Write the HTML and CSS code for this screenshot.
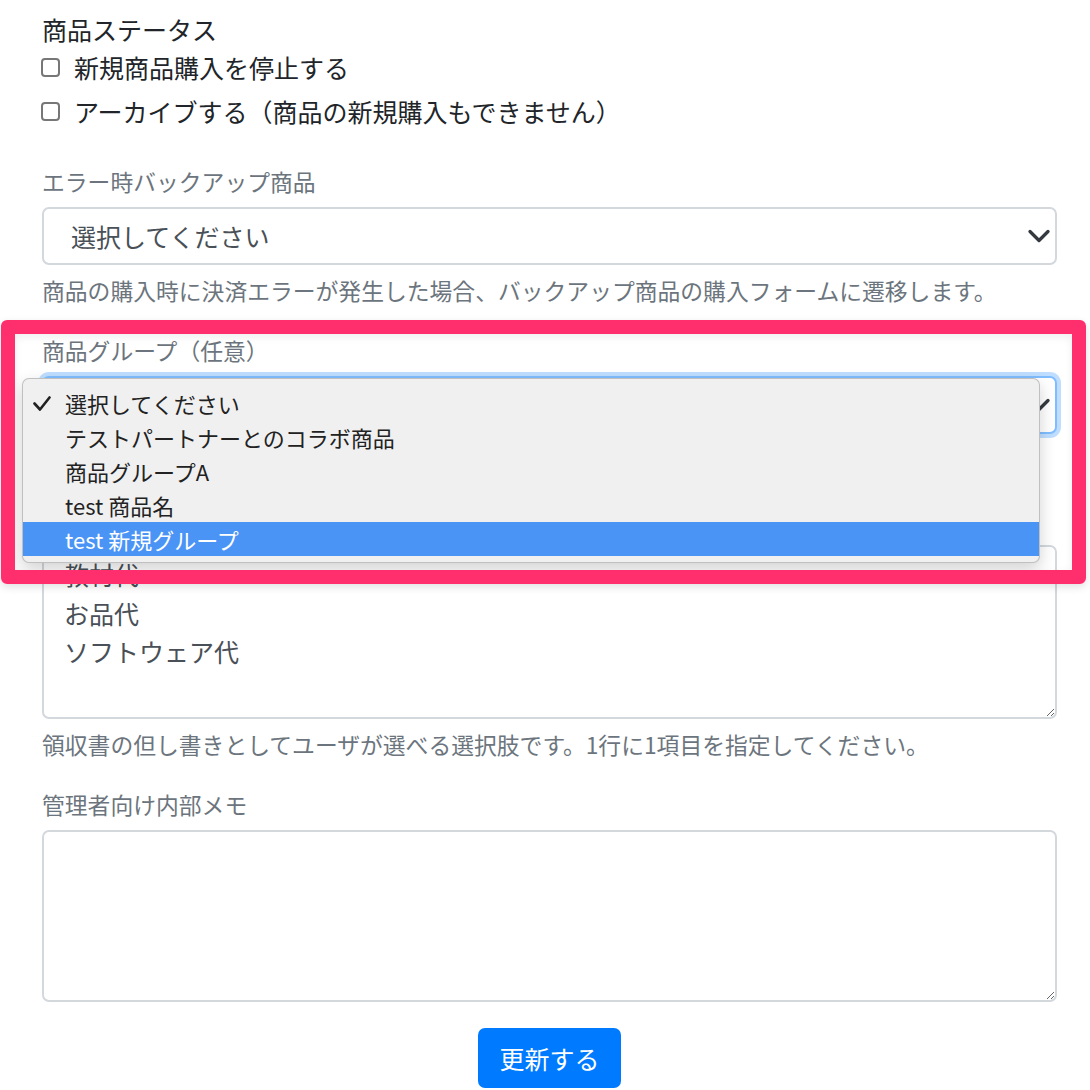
FILE: index.html
```html
<!DOCTYPE html>
<html lang="ja">
<head>
<meta charset="utf-8">
<title>商品設定</title>
<link rel="stylesheet" href="styles.css">
</head>
<body>
<div class="page">
  <section class="status">
    <div class="status-title">商品ステータス</div>
    <label class="check-row"><input type="checkbox" class="check"><span>新規商品購入を停止する</span></label>
    <label class="check-row"><input type="checkbox" class="check"><span>アーカイブする（商品の新規購入もできません）</span></label>
  </section>

  <div class="group">
    <div class="label">エラー時バックアップ商品</div>
    <div class="select">
      <span>選択してください</span>
      <svg class="chev" width="24" height="24" viewBox="0 0 16 16"><path d="M2 5l6 6 6-6" fill="none" stroke="#343a40" stroke-width="2.2" stroke-linecap="round" stroke-linejoin="round"/></svg>
    </div>
    <div class="help">商品の購入時に決済エラーが発生した場合、バックアップ商品の購入フォームに遷移します。</div>
  </div>

  <div class="group">
    <div class="label">商品グループ（任意）</div>
    <div class="select-wrap">
      <div class="select focused">
        <span></span>
        <svg class="chev" width="24" height="24" viewBox="0 0 16 16"><path d="M2 5l6 6 6-6" fill="none" stroke="#343a40" stroke-width="2.2" stroke-linecap="round" stroke-linejoin="round"/></svg>
      </div>
      <ul class="menu">
        <li class="item"><span class="tick"><svg width="18" height="15" viewBox="0 0 18 15"><path d="M1.5 7.5l5.5 6 9.5-12" fill="none" stroke="#222" stroke-width="2.6" stroke-linecap="round" stroke-linejoin="round"/></svg></span><span>選択してください</span></li>
        <li class="item"><span class="tick"></span><span>テストパートナーとのコラボ商品</span></li>
        <li class="item"><span class="tick"></span><span>商品グループA</span></li>
        <li class="item"><span class="tick"></span><span>test 商品名</span></li>
        <li class="item active"><span class="tick"></span><span>test 新規グループ</span></li>
      </ul>
    </div>
    <div class="help spacer"></div>
  </div>

  <div class="group">
    <div class="label spacer"></div>
    <textarea class="area">教材代
お品代
ソフトウェア代</textarea>
    <div class="help">領収書の但し書きとしてユーザが選べる選択肢です。1行に1項目を指定してください。</div>
  </div>

  <div class="group">
    <div class="label">管理者向け内部メモ</div>
    <textarea class="area memo"></textarea>
  </div>

  <div class="actions"><button class="btn" type="button">更新する</button></div>

  <div class="highlight"></div>
</div>
</body>
</html>
```
FILE: styles.css
```css
html, body {
  margin: 0;
  padding: 0;
  background: #fff;
}

body {
  font-family: "Noto Sans CJK JP", "Noto Sans", sans-serif;
  color: #212529;
}

.page {
  position: relative;
  padding: 13px 33px 0 42px;
}

.status {
  margin-bottom: 33px;
}

.status-title {
  font-size: 25px;
  line-height: 32px;
  color: #212529;
}

.check-row {
  display: flex;
  align-items: center;
  height: 44px;
  gap: 14px;
  font-size: 25px;
  color: #212529;
}

.check {
  -webkit-appearance: none;
  appearance: none;
  box-sizing: border-box;
  width: 19px;
  height: 19px;
  margin: 0 0 0 -1px;
  border: 2px solid #777;
  border-radius: 4px;
  background: #fff;
  flex: none;
}

.group {
  margin-bottom: 28px;
}

.label {
  font-size: 22.8px;
  line-height: 32px;
  color: #6c757d;
  margin-bottom: 9px;
}

.help {
  font-size: 22.8px;
  line-height: 32px;
  color: #6c757d;
  margin-top: 10px;
  white-space: nowrap;
}

.spacer {
  height: 32px;
}

.select-wrap {
  position: relative;
}

.select {
  box-sizing: border-box;
  height: 58px;
  border: 2px solid #d3d8dd;
  border-radius: 7px;
  display: flex;
  align-items: center;
  justify-content: space-between;
  padding: 0 4px 0 27px;
  font-size: 25px;
  color: #495057;
  background: #fff;
}

.select.focused {
  border-color: #80bdff;
  box-shadow: 0 0 0 4px rgba(0, 123, 255, 0.25);
}

.chev {
  display: block;
  flex: none;
}

.menu {
  position: absolute;
  top: 2px;
  left: -20px;
  width: 1018px;
  box-sizing: border-box;
  margin: 0;
  padding: 7px 0 6px;
  list-style: none;
  background: #f0f0f0;
  border: 1px solid rgba(0, 0, 0, 0.2);
  border-radius: 7px;
  box-shadow: 0 6px 16px rgba(0, 0, 0, 0.18);
  font-size: 22px;
  color: #222;
  z-index: 5;
  overflow: hidden;
}

.item {
  display: flex;
  align-items: center;
  height: 34px;
}

.item.active {
  background: #4a94f6;
  color: #fff;
}

.tick {
  width: 42px;
  flex: none;
  display: flex;
  align-items: center;
  padding-left: 10px;
  box-sizing: border-box;
}

.tick svg {
  display: block;
}

.area {
  display: block;
  box-sizing: border-box;
  width: 100%;
  height: 174px;
  margin: 0;
  border: 2px solid #d3d8dd;
  border-radius: 7px;
  padding: 8px 20px;
  font-family: "Noto Sans CJK JP", "Noto Sans", sans-serif;
  font-size: 25px;
  line-height: 38.5px;
  color: #495057;
  background: #fff;
  resize: vertical;
  overflow: hidden;
}

.area.memo {
  height: 172px;
}

.actions {
  display: flex;
  justify-content: center;
  margin-top: -2px;
}

.btn {
  height: 60px;
  padding: 0 21px;
  background: #007bff;
  color: #fff;
  border: none;
  border-radius: 7px;
  font-family: "Noto Sans CJK JP", "Noto Sans", sans-serif;
  font-size: 25px;
}

.highlight {
  position: absolute;
  left: 1px;
  top: 320px;
  width: 1085px;
  height: 264px;
  box-sizing: border-box;
  border: 14px solid #ff2e6c;
  border-radius: 6px;
  box-shadow: 0 3px 8px rgba(0, 0, 0, 0.12), inset 0 3px 8px rgba(0, 0, 0, 0.07);
  pointer-events: none;
  z-index: 10;
}
```
